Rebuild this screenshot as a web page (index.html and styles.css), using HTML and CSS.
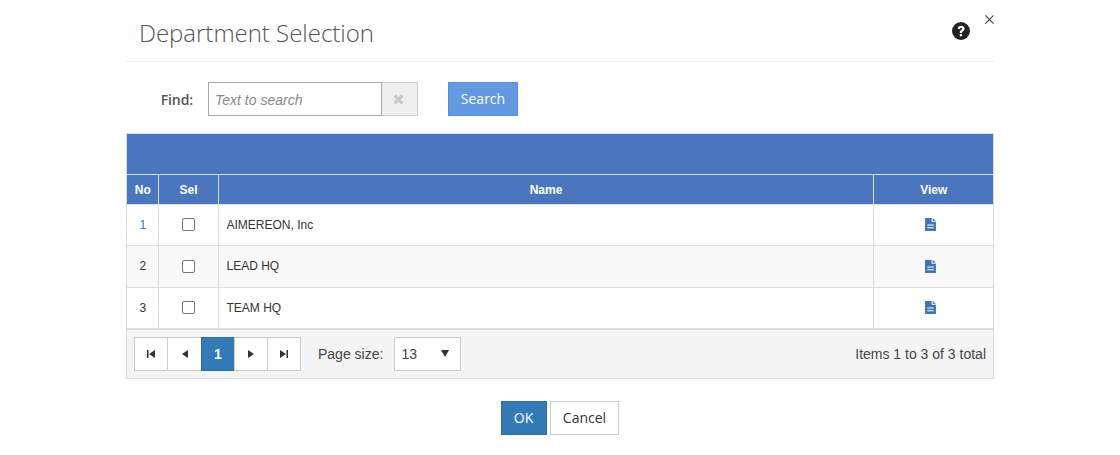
FILE: index.html
```html
<!DOCTYPE html>
<html lang="en">
<head>
<meta charset="utf-8">
<title>Department Selection</title>
<link rel="stylesheet" href="styles.css">
</head>
<body>
<div class="modal">
  <header class="modal-header">
    <h1 class="modal-title">Department Selection</h1>
    <svg class="help" viewBox="0 0 24 24" width="18" height="18"><circle cx="12" cy="12" r="12" fill="#222"/><path d="M7.6 9.2C7.8 6.6 9.6 5 12.2 5c2.600 0 4.500 1.600 4.500 3.900 0 1.700-.9 2.600-2.100 3.400-.9.6-1.200 1-1.200 1.900v.4h-3v-.7c0-1.500.6-2.300 1.700-3.100 1-.7 1.500-1.100 1.500-1.800s-.6-1.200-1.400-1.200c-.9 0-1.500.6-1.600 1.500z" fill="#fff"/><rect x="10.400" y="16" width="3" height="3" fill="#fff"/></svg>
    <svg class="close" viewBox="0 0 10 10" width="9" height="9"><path d="M.5.500l9 9M9.500.500l-9 9" stroke="#444" stroke-width="1.300" fill="none"/></svg>
  </header>
  <div class="find-row">
    <label class="find-label">Find:</label>
    <input class="find-input" type="text" placeholder="Text to search">
    <span class="find-clear"><svg viewBox="0 0 10 10" width="10" height="10"><path d="M1.500 1.500l7 7M8.500 1.500l-7 7" stroke="#c3c9d2" stroke-width="2.800" fill="none"/></svg></span>
    <button class="btn-search">Search</button>
  </div>
  <div class="grid">
    <div class="band"></div>
    <table class="data">
      <colgroup><col class="c-no"><col class="c-sel"><col><col class="c-view"></colgroup>
      <thead>
        <tr><th>No</th><th>Sel</th><th>Name</th><th>View</th></tr>
      </thead>
      <tbody>
        <tr><td class="num link">1</td><td class="mid"><span class="check"></span></td><td>AIMEREON, Inc</td><td class="mid"><svg class="doc" viewBox="1 0 10 12" width="11" height="13"><path d="M1 0h6v3.500h4V12H1z" fill="#3f74b5"/><path d="M8 0l3 2.600H8z" fill="#3f74b5"/><path d="M3 6h6v1H3zM3 8.500h6v1H3z" fill="#fff"/></svg></td></tr>
        <tr class="alt"><td class="num">2</td><td class="mid"><span class="check"></span></td><td>LEAD HQ</td><td class="mid"><svg class="doc" viewBox="1 0 10 12" width="11" height="13"><path d="M1 0h6v3.500h4V12H1z" fill="#3f74b5"/><path d="M8 0l3 2.600H8z" fill="#3f74b5"/><path d="M3 6h6v1H3zM3 8.500h6v1H3z" fill="#fff"/></svg></td></tr>
        <tr><td class="num">3</td><td class="mid"><span class="check"></span></td><td>TEAM HQ</td><td class="mid"><svg class="doc" viewBox="1 0 10 12" width="11" height="13"><path d="M1 0h6v3.500h4V12H1z" fill="#3f74b5"/><path d="M8 0l3 2.600H8z" fill="#3f74b5"/><path d="M3 6h6v1H3zM3 8.500h6v1H3z" fill="#fff"/></svg></td></tr>
      </tbody>
    </table>
    <div class="pager">
      <div class="pages">
        <span class="page"><svg viewBox="0 0 8 8" width="8" height="8"><path d="M0 0h1.500v8H0zM8 0v8L2 4z" fill="#333"/></svg></span>
        <span class="page"><svg viewBox="0 0 8 8" width="8" height="8"><path d="M7 0v8L1 4z" fill="#333"/></svg></span>
        <span class="page current">1</span>
        <span class="page"><svg viewBox="0 0 8 8" width="8" height="8"><path d="M1 0v8l6-4z" fill="#333"/></svg></span>
        <span class="page"><svg viewBox="0 0 8 8" width="8" height="8"><path d="M0 0v8l6-4zM6.500 0H8v8H6.500z" fill="#333"/></svg></span>
      </div>
      <span class="size-label">Page size:</span>
      <div class="size-select"><span>13</span><svg viewBox="0 0 8 7" width="8" height="7"><path d="M0 0h8L4 7z" fill="#333"/></svg></div>
      <span class="total">Items 1 to 3 of 3 total</span>
    </div>
  </div>
  <div class="actions">
    <button class="btn-ok">OK</button>
    <button class="btn-cancel">Cancel</button>
  </div>
</div>
</body>
</html>
```
FILE: styles.css
```css
* { box-sizing: border-box; }
html, body { margin: 0; background: #fff; }
body { width: 1120px; height: 455px; overflow: hidden; font-family: "Liberation Sans", Arial, sans-serif; color: #333; }
.modal { width: 868px; margin-left: 126px; }
.modal-header { height: 62px; border-bottom: 1px solid #eee; position: relative; padding: 18px 13px 0; }
.modal-title { margin: 0; font: 300 24px/30px "Open Sans", sans-serif; color: #555; letter-spacing: -.02px; }
.help { position: absolute; left: 826px; top: 22px; }
.close { position: absolute; left: 859px; top: 15px; }
.find-row { display: flex; align-items: center; height: 34px; margin-top: 20px; }
.find-label { width: 82px; padding-right: 15px; text-align: right; font: 600 14px "Open Sans", sans-serif; color: #555; letter-spacing: -.1px; }
.find-input { width: 174px; height: 34px; border: 1px solid #aaa; padding: 2px 6px 0; font: italic 14px "Liberation Sans", sans-serif; color: #333; outline: 0; }
.find-input::placeholder { color: #888; opacity: 1; }
.find-clear { width: 36px; height: 34px; border: 1px solid #ccc; border-left: 0; background: #eee; display: flex; align-items: center; justify-content: center; }
.find-clear svg { width: 11px; height: 11px; margin-right: 2px; }
.btn-search { width: 70px; height: 34px; margin-left: 30px; background: #6299e0; border: 1px solid #5b91d8; color: #fff; font: 14px "Open Sans", sans-serif; padding: 0 0 2px; }
.grid { margin-top: 17px; border: 1px solid #ddd; }
.band { height: 41px; background: #4a76bd; border-bottom: 1px solid #ddd; }
.data { width: 100%; border-collapse: collapse; table-layout: fixed; font-size: 12px; }
.c-no { width: 31px; }
.c-sel { width: 60px; }
.c-view { width: 120px; }
.data th { height: 29px; padding: 1px 0 0 1px; background: #4a76bd; color: #fff; font-weight: 700; text-align: center; border-left: 1px solid #ddd; border-bottom: 1px solid #ddd; }
.data th:first-child, .data td:first-child { border-left: 0; }
.data td { height: 41.500px; padding: 0 8px; border-left: 1px solid #ddd; border-bottom: 1px solid #ddd; color: #333; vertical-align: middle; }
.data tbody tr:last-child td { border-bottom-width: 2px; }
.data .alt td { background: #f9f9f9; }
.data .num, .data .mid { text-align: center; padding: 0; }
.data .num { padding-left: 1px; }
.data .link { color: #337ab7; }
.check { display: inline-block; width: 13px; height: 13px; margin-bottom: 1px; border: 1px solid #767676; border-radius: 2px; background: #fff; vertical-align: middle; }
.doc { vertical-align: middle; margin: 0 6px 1px 0; }
.pager { height: 48px; background: #f4f4f4; display: flex; align-items: center; padding: 0 7px; font-size: 14px; color: #444; }
.pages { display: flex; height: 34px; }
.page { width: 34px; height: 34px; margin-left: -1px; background: #fff; border: 1px solid #ccc; display: flex; align-items: center; justify-content: center; }
.page:first-child { margin-left: 0; }
.page:nth-child(2) { width: 35px; }
.page.current { background: #337ab7; border-color: #2e6da4; color: #fff; font-weight: 700; }
.size-label { margin-left: 17px; }
.size-select { width: 67px; height: 34px; margin-left: 11px; background: #fff; border: 1px solid #ccc; display: flex; align-items: center; justify-content: space-between; padding: 0 11px 0 6px; }
.total { margin-left: auto; }
.actions { display: flex; justify-content: center; gap: 3px; margin-top: 22px; padding-right: 1px; }
.btn-ok, .btn-cancel { height: 34px; font: 14px "Open Sans", sans-serif; padding: 0; }
.btn-ok { width: 46px; background: #337ab7; border: 1px solid #2e6da4; color: #fff; }
.btn-cancel { width: 69px; padding-left: 1px; background: #fff; border: 1px solid #ccc; color: #333; }
```
